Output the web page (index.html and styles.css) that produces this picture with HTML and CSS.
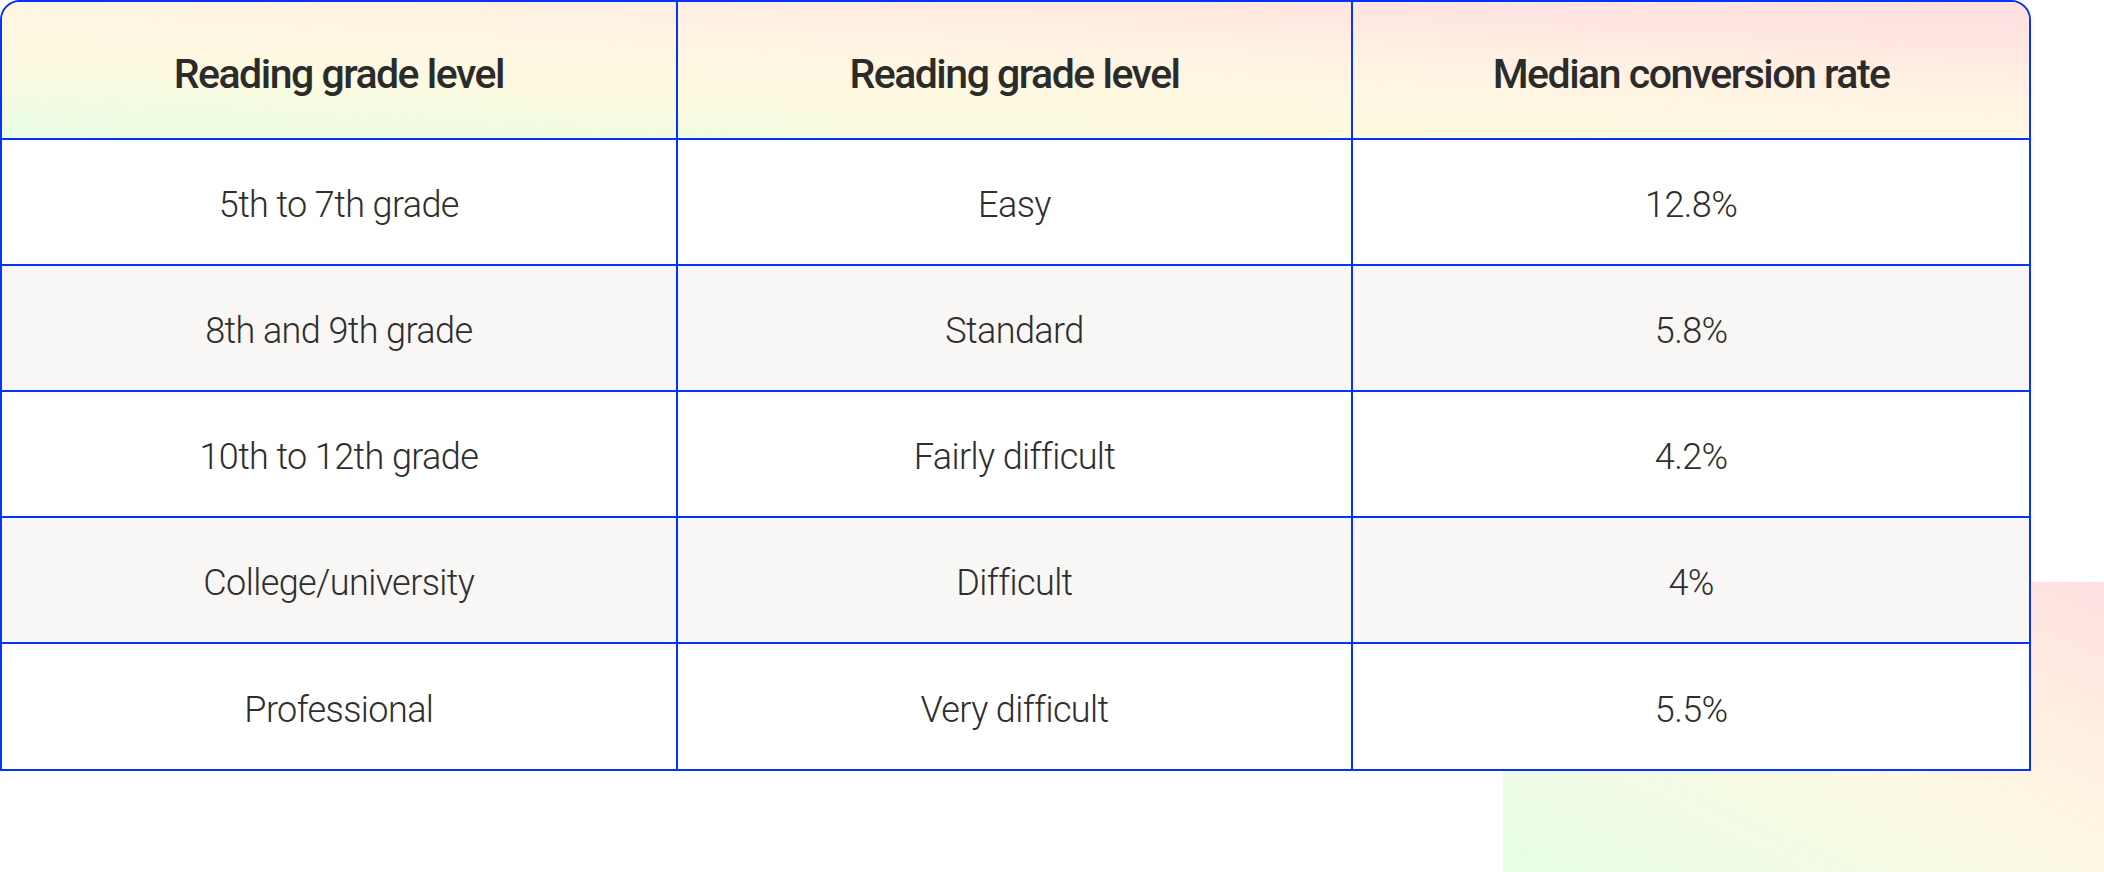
FILE: index.html
```html
<!DOCTYPE html>
<html lang="en">
<head>
<meta charset="utf-8">
<title>Reading grade level</title>
<link rel="stylesheet" href="styles.css">
</head>
<body>
<div class="page">
  <div class="deco"></div>
  <div class="table">
    <div class="row head">
      <div class="cell">Reading grade level</div>
      <div class="cell">Reading grade level</div>
      <div class="cell">Median conversion rate</div>
    </div>
    <div class="row">
      <div class="cell">5th to 7th grade</div>
      <div class="cell">Easy</div>
      <div class="cell">12.8%</div>
    </div>
    <div class="row alt">
      <div class="cell">8th and 9th grade</div>
      <div class="cell">Standard</div>
      <div class="cell">5.8%</div>
    </div>
    <div class="row">
      <div class="cell">10th to 12th grade</div>
      <div class="cell">Fairly difficult</div>
      <div class="cell">4.2%</div>
    </div>
    <div class="row alt">
      <div class="cell">College/university</div>
      <div class="cell">Difficult</div>
      <div class="cell">4%</div>
    </div>
    <div class="row">
      <div class="cell">Professional</div>
      <div class="cell">Very difficult</div>
      <div class="cell">5.5%</div>
    </div>
  </div>
</div>
</body>
</html>
```

FILE: styles.css
```css
html, body {
  margin: 0;
  padding: 0;
  background: #ffffff;
}

.page {
  position: relative;
  width: 2104px;
  height: 872px;
  overflow: hidden;
  font-family: Roboto, "Liberation Sans", sans-serif;
  color: #333333;
}

.deco {
  position: absolute;
  left: 1503px;
  top: 582px;
  width: 601px;
  height: 290px;
  background: linear-gradient(to top right, #e6fde6 0%, #fdf9e2 50%, #ffeee2 72%, #ffe0e1 100%);
}

.table {
  position: relative;
  width: 2031px;
  box-sizing: border-box;
  border: 2px solid #0433ff;
  border-radius: 20px 20px 0 0;
  overflow: hidden;
  display: flex;
  flex-direction: column;
  background: #ffffff;
}

.row {
  display: grid;
  grid-template-columns: 1fr 1fr 1fr;
  height: 126px;
  border-bottom: 2px solid #0433ff;
  box-sizing: border-box;
  background: #ffffff;
}

.row:last-child {
  border-bottom: none;
  height: 125px;
}

.row.alt {
  background: #f8f7f5;
}

.row.head {
  height: 138px;
  background: linear-gradient(3deg, #e7fde4 0%, #fdfae0 32%, #fff3e3 60%, #ffe6e1 82%, #ffdfe1 100%);
}

.cell {
  display: flex;
  align-items: center;
  justify-content: center;
  padding-top: 6px;
  box-sizing: border-box;
  border-right: 2px solid #0433ff;
  font-size: 36px;
  font-weight: 300;
  letter-spacing: -0.6px;
  color: #2e2e2e;
}

.cell:last-child {
  border-right: none;
}

.head .cell {
  padding-top: 8px;
  font-size: 41px;
  font-weight: 500;
  letter-spacing: -1.5px;
  color: #2b2b2b;
}
```
